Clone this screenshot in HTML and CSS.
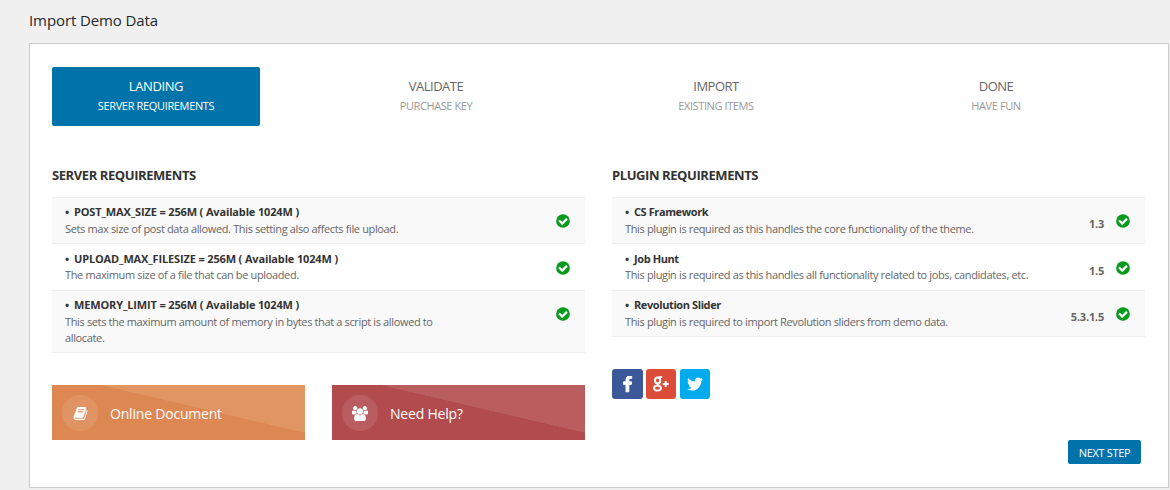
FILE: index.html
```html
<!DOCTYPE html>
<html lang="en">
<head>
<meta charset="utf-8">
<title>Import Demo Data</title>
<link rel="stylesheet" href="styles.css">
</head>
<body>
<svg class="defs" aria-hidden="true">
  <symbol id="check" viewBox="0 0 1792 1792"><circle cx="896" cy="896" r="768"/><path fill="#fff" d="M1412 734q0-28-18-46l-91-90q-19-19-45-19t-45 19l-408 407-226-226q-19-19-45-19t-45 19l-91 90q-18 18-18 46 0 27 18 45l362 362q19 19 45 19 27 0 46-19l543-543q18-18 18-45z"/></symbol>
</svg>
<h1 class="page-title">Import Demo Data</h1>
<main class="panel">
  <nav class="steps">
    <div class="step active"><b>LANDING</b><small>SERVER REQUIREMENTS</small></div>
    <div class="step"><b>VALIDATE</b><small>PURCHASE KEY</small></div>
    <div class="step"><b>IMPORT</b><small>EXISTING ITEMS</small></div>
    <div class="step"><b>DONE</b><small>HAVE FUN</small></div>
  </nav>
  <div class="columns">
    <section>
      <h2>SERVER REQUIREMENTS</h2>
      <ul class="list server">
        <li><div class="text"><strong><i>•</i>POST_MAX_SIZE = 256M ( Available 1024M )</strong><p>Sets max size of post data allowed. This setting also affects file upload.</p></div><svg class="ok"><use href="#check"/></svg></li>
        <li><div class="text"><strong><i>•</i>UPLOAD_MAX_FILESIZE = 256M ( Available 1024M )</strong><p>The maximum size of a file that can be uploaded.</p></div><svg class="ok"><use href="#check"/></svg></li>
        <li><div class="text"><strong><i>•</i>MEMORY_LIMIT = 256M ( Available 1024M )</strong><p>This sets the maximum amount of memory in bytes that a script is allowed to<br>allocate.</p></div><svg class="ok"><use href="#check"/></svg></li>
      </ul>
      <div class="links">
        <a class="link orange"><span class="disc"><svg width="15" height="15" viewBox="0 0 1792 1792"><path d="M1703 478q40 57 18 129l-275 906q-19 64-76.5 107.5t-122.5 43.5h-923q-77 0-148.5-53.5t-99.5-131.5q-24-67-2-127 0-4 3-27t4-37q1-8-3-21.5t-3-19.5q2-11 8-21t16.5-23.5 16.5-23.5q23-38 45-91.5t30-91.5q3-10 .5-30t-.5-28q3-11 17-28t17-23q21-36 42-92t25-90q1-9-2.5-32t.5-28q4-13 22-30.5t22-22.5q19-26 42.5-84.5t27.5-96.5q1-8-3-25.5t-2-26.5q2-8 9-18t18-23 17-21q8-12 16.5-30.5t15-35 16-36 19.5-32 26.5-23.5 36-11.5 47.5 5.5l-1 3q38-9 51-9h761q74 0 114 56t18 130l-274 906q-36 119-71.5 153.5t-128.5 34.5h-869q-27 0-38 15-11 16-1 43 24 70 144 70h923q29 0 56-15.5t35-41.5l300-987q7-22 5-57 38 15 59 43zm-1064 2q-4 13 2 22.5t20 9.5h608q13 0 25.5-9.5t16.5-22.5l21-64q4-13-2-22.5t-20-9.5h-608q-13 0-25.5 9.5t-16.5 22.5zm-83 256q-4 13 2 22.5t20 9.5h608q13 0 25.5-9.5t16.5-22.5l21-64q4-13-2-22.5t-20-9.5h-608q-13 0-25.5 9.5t-16.5 22.5z"/></svg></span>Online Document</a>
        <a class="link red"><span class="disc"><svg width="16" height="15" viewBox="0 0 1920 1792"><path d="M593 896q-162 5-265 128h-134q-82 0-138-40.5t-56-118.5q0-353 124-353 6 0 43.5 21t97.5 42.5 119 21.5q67 0 133-23-5 37-5 66 0 159 93 256zm1071 637q0 120-73 189.5t-194 69.5h-874q-121 0-194-69.5t-73-189.5q0-53 3.5-103.5t14-109 26.5-108.5 43-97.5 62-81 85.5-53.5 111.5-20q10 0 43 21.5t73 48 107 48 135 21.5 135-21.5 107-48 73-48 43-21.5q61 0 111.5 20t85.5 53.5 62 81 43 97.5 26.5 108.5 14 109 3.5 103.5zm-1024-1277q0 106-75 181t-181 75-181-75-75-181 75-181 181-75 181 75 75 181zm704 384q0 159-112.5 271.5t-271.5 112.5-271.5-112.5-112.5-271.5 112.5-271.5 271.5-112.5 271.5 112.5 112.5 271.5zm576 225q0 78-56 118.5t-138 40.5h-134q-103-123-265-128 93-97 93-256 0-29-5-66 66 23 133 23 59 0 119-21.5t97.5-42.5 43.5-21q124 0 124 353zm-128-609q0 106-75 181t-181 75-181-75-75-181 75-181 181-75 181 75 75 181z"/></svg></span>Need Help?</a>
      </div>
    </section>
    <section>
      <h2>PLUGIN REQUIREMENTS</h2>
      <ul class="list plugin">
        <li><div class="text"><strong><i>•</i>CS Framework</strong><p>This plugin is required as this handles the core functionality of the theme.</p></div><span class="version">1.3</span><svg class="ok"><use href="#check"/></svg></li>
        <li><div class="text"><strong><i>•</i>Job Hunt</strong><p>This plugin is required as this handles all functionality related to jobs, candidates, etc.</p></div><span class="version">1.5</span><svg class="ok"><use href="#check"/></svg></li>
        <li><div class="text"><strong><i>•</i>Revolution Slider</strong><p>This plugin is required to import Revolution sliders from demo data.</p></div><span class="version">5.3.1.5</span><svg class="ok"><use href="#check"/></svg></li>
      </ul>
      <div class="social">
        <a class="fb"><svg width="17" height="17" viewBox="0 0 1792 1792"><path stroke="#fff" stroke-width="90" d="M1343 12v264h-157q-86 0-116 36t-30 108v189h293l-39 296h-254v759h-306v-759h-255v-296h255v-218q0-186 104-288.5t277-102.5q147 0 228 12z"/></svg></a>
        <a class="gp"><svg width="18" height="18" viewBox="0 0 18 18"><g fill="none" stroke="#fff"><ellipse cx="5.6" cy="5.5" rx="2.6" ry="3" stroke-width="2"/><path d="M5.5 2.2h4.8M6.4 8.6c-1.8 1 0 1.6 1.3 2.4" stroke-width="1.7"/><ellipse cx="5.5" cy="13.1" rx="3.5" ry="2.5" stroke-width="1.9"/><path d="M13.7 6v6M10.7 9h6" stroke-width="2.1"/></g></svg></a>
        <a class="tw"><svg width="18" height="18" viewBox="0 0 1792 1792"><path d="M1684 408q-67 98-162 167 1 14 1 42 0 130-38 259.5t-115.5 248.5-184.5 210.5-258 146-323 54.5q-271 0-496-145 35 4 78 4 225 0 401-138-105-2-188-64.5t-114-159.5q33 5 61 5 43 0 85-11-112-23-185.5-111.5t-73.5-205.5v-4q68 38 146 41-66-44-105-115t-39-154q0-88 44-163 121 149 294.5 238.5t371.5 99.5q-8-38-8-74 0-134 94.5-228.5t228.5-94.5q140 0 236 102 109-21 205-78-37 115-142 178 93-10 186-50z"/></svg></a>
      </div>
      <button class="next">NEXT STEP</button>
    </section>
  </div>
</main>
</body>
</html>
```
FILE: styles.css
```css
* { box-sizing: border-box; }
body {
  margin: 0;
  padding-top: 10px;
  height: 490px;
  overflow: hidden;
  background: #f0f0f0;
  color: #666;
  font-family: "Open Sans", "Noto Sans", sans-serif;
  font-size: 11px;
}
.defs { position: absolute; width: 0; height: 0; }
.page-title {
  margin: 0 0 13px 29px;
  font-size: 15px;
  line-height: 20px;
  font-weight: 400;
  letter-spacing: -.1px;
  color: #23282d;
}
.panel {
  width: 1140px;
  height: 445px;
  margin-left: 29px;
  padding: 23px 0 0 22px;
  background: #fff;
  border: 1px solid #ccc;
}
.steps { display: flex; gap: 72px; }
.step {
  width: 208px;
  height: 59px;
  padding-top: 9px;
  text-align: center;
  border-radius: 2px;
}
.step b, .step small { display: block; }
.step b {
  font-weight: 400;
  font-size: 13px;
  line-height: 20px;
  letter-spacing: -.5px;
  color: #666;
}
.step small {
  margin-top: 1px;
  font-size: 11px;
  line-height: 18px;
  letter-spacing: -.4px;
  color: #999;
}
.active { background: #0073aa; }
.step.active b { color: #fff; letter-spacing: -.4px; }
.step.active small { color: #fff; letter-spacing: -.35px; }
.columns { display: flex; gap: 27px; margin-top: 39px; }
section { width: 533px; }
h2 {
  margin: 0 0 12px;
  font-size: 13px;
  line-height: 20px;
  font-weight: 700;
  letter-spacing: -.42px;
  color: #333;
}
.list { margin: 0; padding: 0; list-style: none; border-bottom: 1px solid #eee; }
.list li {
  display: flex;
  align-items: flex-start;
  min-height: 46px;
  padding: 6px 14px 0 13px;
  border-top: 1px solid #eee;
  background: #f9f9f9;
}
.list li:nth-child(2) { min-height: 47px; padding-top: 7px; background: #fff; }
.list li:nth-child(2) p { margin-top: 0; }
.server li:last-child { min-height: 62px; }
.text { flex: 1; white-space: nowrap; line-height: 16px; }
.text strong { display: block; font-weight: 700; color: #333; }
.server strong { letter-spacing: -.15px; }
.plugin strong { letter-spacing: -.4px; }
.text i { display: inline-block; width: 9px; font-style: normal; }
.text p { margin: 1px 0 0; letter-spacing: -.36px; }
.version {
  margin: 12px 11px 0 0;
  font-weight: 700;
  line-height: 16px;
  letter-spacing: -.2px;
}
.ok { width: 16px; height: 16px; margin-top: 9px; fill: #0a9a1e; }
.links { display: flex; gap: 27px; margin-top: 32px; }
.link {
  display: flex;
  align-items: center;
  width: 253px;
  height: 55px;
  padding: 1px 0 0 10px;
  font-size: 14px;
  font-weight: 500;
  letter-spacing: -.2px;
  color: #fff;
}
.orange { background: linear-gradient(to top right, #dd8853 50%, #e19563 50.4%) 48px 0 / 205px 48px no-repeat #dd8853; }
.red { background: linear-gradient(to top right, #b14b4e 50%, #b95d5f 50.4%) 48px 0 / 205px 48px no-repeat #b14b4e; }
.disc {
  display: flex;
  align-items: center;
  justify-content: center;
  width: 36px;
  height: 36px;
  margin-right: 12px;
  border-radius: 50%;
  background: rgba(255, 255, 255, .1);
}
.link svg, .social svg { fill: #fff; }
.social { display: flex; gap: 4px; margin-top: 32px; }
.social a {
  display: flex;
  align-items: center;
  justify-content: center;
  width: 30px;
  height: 30px;
  border-radius: 3px;
}
.social .fb { width: 31px; background: #3b5998; margin-right: -1px; }
.gp { background: #dd4b39; }
.tw { background: #00acee; }
.next {
  display: block;
  width: 73px;
  height: 24px;
  margin: 41px 4px 0 auto;
  padding: 1px 0 0;
  border: 0;
  border-radius: 2px;
  background: #0073aa;
  color: #fff;
  font: 500 11px "Open Sans", sans-serif;
  letter-spacing: -.35px;
}
```
